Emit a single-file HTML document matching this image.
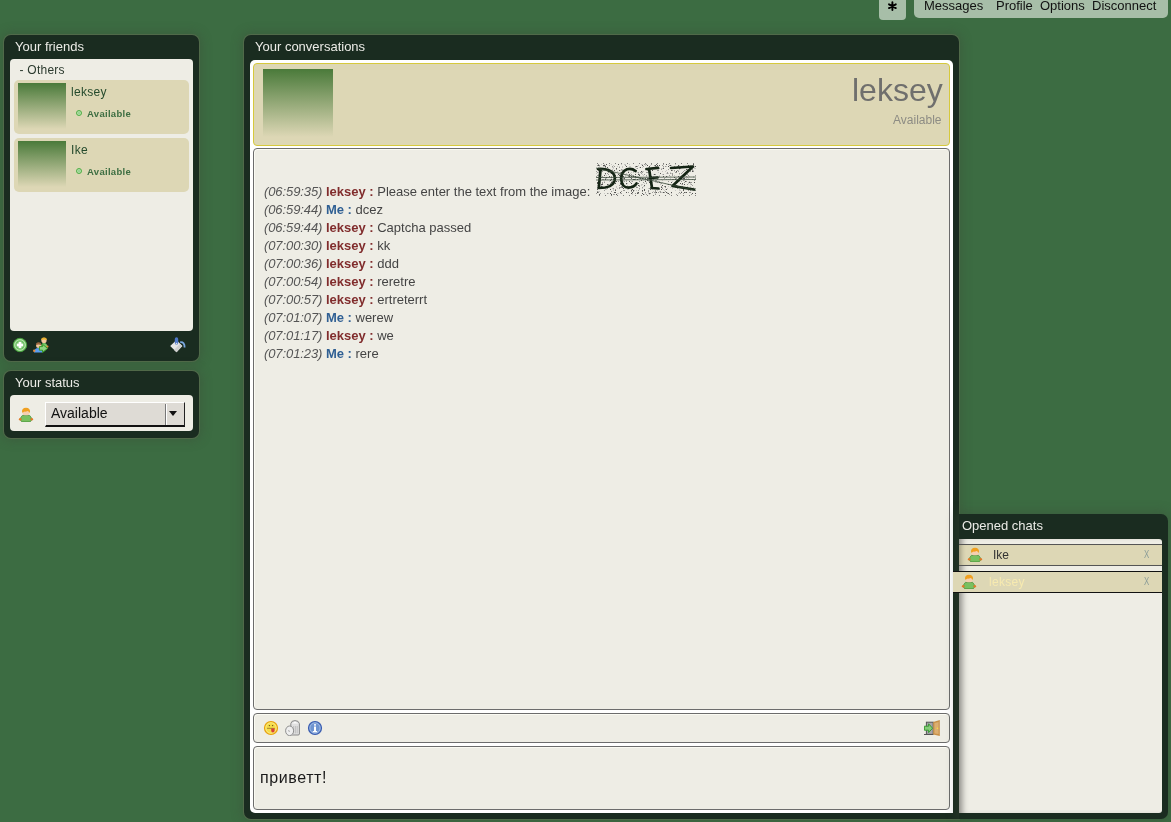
<!DOCTYPE html>
<html><head><meta charset="utf-8">
<style>
*{margin:0;padding:0;box-sizing:border-box}
html,body{width:1171px;height:822px;overflow:hidden}
body{background:#3c6c42;font-family:"Liberation Sans",sans-serif;position:relative}
.a{position:absolute}
.t{position:absolute;white-space:nowrap;line-height:1}
.panel{position:absolute;background:#1a2c20;border-radius:7px;box-shadow:0 0 0 1px rgba(120,120,95,.35),0 0 11px 2px rgba(60,70,55,.4)}
.ptitle{position:absolute;color:#ebebe6;font-size:13px;line-height:1;white-space:nowrap}
.inner{position:absolute;background:#eeede5;border-radius:4px}
.item{position:absolute;background:#ddd7b5;border-radius:5px}
.av{position:absolute;width:48px;height:46px;background:linear-gradient(#4a7a3a,#ddd7b5)}
.fname{position:absolute;font-size:12px;color:#244a2c;line-height:1;letter-spacing:.3px}
.dot{position:absolute;width:6px;height:6px;border-radius:50%;background:#9ad492;border:1px solid #52ae46;box-shadow:inset 0 0 0 .6px #c4e8bc}
.favail{position:absolute;font-size:9.5px;font-weight:bold;color:#3d6e42;line-height:1;letter-spacing:.3px}
.box{position:absolute;background:#eeede5;border:1px solid #6c6c6c;border-radius:4px;box-shadow:inset 1px 1px 0 #fbfbf3}
.msg{position:relative;font-size:13px;line-height:18px;color:#444;white-space:nowrap}
.ts{font-style:italic;color:#555;letter-spacing:-.1px}
.nl{font-weight:bold;color:#802c2c}
.nm{font-weight:bold;color:#2f5f93}
.menu{position:absolute;background:#a7bea8;}
.mi{position:absolute;top:-1px;font-size:13px;line-height:1;color:#111;white-space:nowrap}
.x{position:absolute;font-size:10px;line-height:1;color:#8a9c98;transform:scale(.78,1);transform-origin:0 0}
</style></head><body><div style="position:absolute;left:0;top:0;width:1171px;height:822px;will-change:transform">

<!-- top menu -->
<div class="menu" style="left:879px;top:0;width:27px;height:20px;border-radius:0 0 4px 4px"></div>
<svg class="a" style="left:886px;top:0" width="13" height="13" viewBox="0 0 13 13"><g stroke="#000" stroke-width="1.9" stroke-linecap="round"><path d="M6.4 2.3V10.1M3 4.3L9.8 8.1M3 8.1L9.8 4.3"/></g></svg>
<div class="menu" style="left:914px;top:0;width:254px;height:18px;border-radius:0 0 5px 5px"></div>
<div class="mi" style="left:924px">Messages</div>
<div class="mi" style="left:996px">Profile</div>
<div class="mi" style="left:1040px">Options</div>
<div class="mi" style="left:1092px">Disconnect</div>

<!-- friends panel -->
<div class="panel" style="left:4px;top:35px;width:195px;height:326px"></div>
<div class="ptitle" style="left:15px;top:40px">Your friends</div>
<div class="inner" style="left:10px;top:59px;width:183px;height:272px"></div>
<div class="t" style="left:19.5px;top:64px;font-size:12px;letter-spacing:.25px;color:#2b3a2e">- Others</div>

<div class="item" style="left:14px;top:80px;width:175px;height:54px"></div>
<div class="av" style="left:18px;top:83px"></div>
<div class="fname" style="left:71px;top:86px">leksey</div>
<div class="dot" style="left:76px;top:110px"></div>
<div class="favail" style="left:87px;top:108.5px">Available</div>

<div class="item" style="left:14px;top:138px;width:175px;height:54px"></div>
<div class="av" style="left:18px;top:141px"></div>
<div class="fname" style="left:71px;top:144px">Ike</div>
<div class="dot" style="left:76px;top:168px"></div>
<div class="favail" style="left:87px;top:166.5px">Available</div>

<!-- friends icons -->
<svg class="a" style="left:12px;top:337px" width="16" height="16" viewBox="0 0 16 16">
<circle cx="8" cy="8" r="6.7" fill="#70c266" stroke="#45a03c" stroke-width=".9"/>
<circle cx="8" cy="8" r="5.3" fill="none" stroke="#c8ecc0" stroke-width=".9"/>
<rect x="6.6" y="4.8" width="2.8" height="6.4" fill="#fff"/><rect x="4.8" y="6.6" width="6.4" height="2.8" fill="#fff"/>
</svg>
<svg class="a" style="left:33px;top:337px" width="16" height="16" viewBox="0 0 16 16">
<path d="M8 10 Q8 6 11 6 Q14.4 6 14.6 10.5Z" fill="#78c868"/><circle cx="14.4" cy="9.6" r="1.1" fill="#e0903a"/>
<circle cx="11" cy="3.4" r="2.6" fill="#f2c8a0"/><path d="M8.2 3.2 Q8 0.2 11 0.4 Q14 0.2 13.8 3.2 Q11 1.8 8.2 3.2Z" fill="#e8b030"/>
<circle cx="5.6" cy="8.6" r="2.5" fill="#f0c8a0"/><path d="M3 8.2 Q2.8 5.3 5.6 5.3 Q8.4 5.3 8.2 8.2 Q5.6 6.8 3 8.2Z" fill="#9a6840"/>
<path d="M1 15.6 Q1 11 5.6 11 Q9 11 9.4 15.6Z" fill="#5a9ef0"/><circle cx="1.2" cy="13.8" r="1.2" fill="#e08a40"/>
<path d="M6.4 9.6h3.2V7.4l5 4-5 4v-2.2H6.4Z" fill="#90d484" stroke="#3a9a2c" stroke-width="1"/>
</svg>
<svg class="a" style="left:170px;top:337px" width="16" height="16" viewBox="0 0 16 16">
<path d="M0.2 9 L6.5 3 L12.3 9 L6.5 15.3Z" fill="#e6e6e6"/>
<path d="M6.5 15.3 L12.3 9 L10 6.8 L4 13Z" fill="#cfcfcf"/>
<rect x="4.8" y="0.2" width="3.4" height="7.6" rx="1.7" fill="#4f78c8"/>
<circle cx="6.5" cy="6.6" r=".8" fill="#ddd"/>
<path d="M10.2 5.2 Q14.8 4.8 14.6 10.5" fill="none" stroke="#7aa8e0" stroke-width="1.8"/>
</svg>

<!-- status panel -->
<div class="panel" style="left:4px;top:371px;width:195px;height:67px"></div>
<div class="ptitle" style="left:15px;top:376px">Your status</div>
<div class="inner" style="left:10px;top:395px;width:183px;height:36px"></div>
<svg class="a" style="left:18px;top:406px" width="16" height="16" viewBox="0 0 16 16">
<path d="M4.4 9.4 Q2.2 11 2.6 14.2 Q3 15.9 5 15.9 L11 15.9 Q13 15.9 13.4 14.2 Q13.8 11 11.6 9.4Z" fill="#78c060" stroke="#3f8a30" stroke-width=".7"/>
<circle cx="2.2" cy="13.2" r="1.3" fill="#e07a28"/><circle cx="13.8" cy="13.2" r="1.3" fill="#e07a28"/>
<rect x="4.6" y="4.8" width="6.8" height="4.4" rx="2" fill="#f5cfb0"/>
<path d="M4 6.4 Q3.6 1.8 8 1.8 Q12.4 1.8 12 6.4 L11.2 6.4 Q10.5 4.8 8.5 5 L8.4 6 Q7 4.8 4.9 6.4Z" fill="#f0a020"/>
</svg>
<div class="a" style="left:45px;top:402px;width:140px;height:25px;background:#dedbd5;border-top:1px solid #fff;border-left:1px solid #fff;border-right:1px solid #222;border-bottom:2px solid #111"></div>
<div class="a" style="left:165px;top:404px;width:1px;height:21px;background:#777"></div>
<div class="a" style="left:166px;top:404px;width:1px;height:21px;background:#fff"></div>
<div class="a" style="left:169px;top:411px;width:0;height:0;border-left:4.5px solid transparent;border-right:4.5px solid transparent;border-top:5px solid #111"></div>
<div class="t" style="left:51px;top:406px;font-size:14px;color:#111">Available</div>

<!-- conversations panel -->
<div class="panel" style="left:244px;top:35px;width:715px;height:784px;border-radius:7px 7px 0 7px"></div>
<div class="ptitle" style="left:255px;top:40px">Your conversations</div>
<div class="a" style="left:250px;top:60px;width:703px;height:753px;background:#fff;border-radius:5px 5px 0 5px"></div>
<div class="a" style="left:253px;top:63px;width:697px;height:83px;background:#ddd7b5;border:1px solid #d6c93c;border-radius:4px"></div>
<div class="a" style="left:263px;top:69px;width:70px;height:68px;background:linear-gradient(#4a7a3a,#ddd7b5)"></div>
<div class="t" style="left:852px;top:74px;font-size:32px;color:#6f6f6d">leksey</div>
<div class="t" style="left:893px;top:114px;font-size:12px;color:#8d8c84">Available</div>

<div class="box" style="left:253px;top:148px;width:697px;height:562px"></div>
<div class="a" style="left:264px;top:163px">
<div class="msg"><span class="ts">(06:59:35)</span> <span class="nl">leksey :</span> Please enter the text from the image: <svg width="100" height="33" viewBox="0 0 100 33" style="vertical-align:baseline;margin-left:2px"><path fill="#222" opacity=".75" d="M75 7h1v1h-1zM88 21h1v1h-1zM8 2h1v1h-1zM30 20h1v1h-1zM37 16h1v1h-1zM13 13h1v1h-1zM37 13h1v1h-1zM72 21h1v1h-1zM39 11h1v1h-1zM93 25h1v1h-1zM82 13h1v1h-1zM53 7h1v1h-1zM2 7h1v1h-1zM5 5h1v1h-1zM9 3h1v1h-1zM10 14h1v1h-1zM26 24h1v1h-1zM7 2h1v1h-1zM17 19h1v1h-1zM43 12h1v1h-1zM60 29h1v1h-1zM63 19h1v1h-1zM1 20h1v1h-1zM11 21h1v1h-1zM39 20h1v1h-1zM86 20h1v1h-1zM96 30h1v1h-1zM27 13h1v1h-1zM40 7h1v1h-1zM5 23h1v1h-1zM35 27h1v1h-1zM51 15h1v1h-1zM47 31h1v1h-1zM17 16h1v1h-1zM14 17h1v1h-1zM15 16h1v1h-1zM2 2h1v1h-1zM79 16h1v1h-1zM93 19h1v1h-1zM20 18h1v1h-1zM24 29h1v1h-1zM33 13h1v1h-1zM87 26h1v1h-1zM87 27h1v1h-1zM9 16h1v1h-1zM18 7h1v1h-1zM74 2h1v1h-1zM87 15h1v1h-1zM81 23h1v1h-1zM24 20h1v1h-1zM65 26h1v1h-1zM35 30h1v1h-1zM95 25h1v1h-1zM55 25h1v1h-1zM38 16h1v1h-1zM51 17h1v1h-1zM5 21h1v1h-1zM96 8h1v1h-1zM45 17h1v1h-1zM46 15h1v1h-1zM3 20h1v1h-1zM19 12h1v1h-1zM9 10h1v1h-1zM84 20h1v1h-1zM36 29h1v1h-1zM46 30h1v1h-1zM58 11h1v1h-1zM49 18h1v1h-1zM75 19h1v1h-1zM36 26h1v1h-1zM35 24h1v1h-1zM40 3h1v1h-1zM83 5h1v1h-1zM42 22h1v1h-1zM48 27h1v1h-1zM1 26h1v1h-1zM53 30h1v1h-1zM48 22h1v1h-1zM99 30h1v1h-1zM4 11h1v1h-1zM23 12h1v1h-1zM28 15h1v1h-1zM35 13h1v1h-1zM51 2h1v1h-1zM30 29h1v1h-1zM20 14h1v1h-1zM22 1h1v1h-1zM19 27h1v1h-1zM88 15h1v1h-1zM64 10h1v1h-1zM56 7h1v1h-1zM39 13h1v1h-1zM8 12h1v1h-1zM58 25h1v1h-1zM11 4h1v1h-1zM90 6h1v1h-1zM12 8h1v1h-1zM37 27h1v1h-1zM99 3h1v1h-1zM42 11h1v1h-1zM42 20h1v1h-1zM46 27h1v1h-1zM97 1h1v1h-1zM52 15h1v1h-1zM67 13h1v1h-1zM15 19h1v1h-1zM41 30h1v1h-1zM75 29h1v1h-1zM53 19h1v1h-1zM3 11h1v1h-1zM41 16h1v1h-1zM88 29h1v1h-1zM60 1h1v1h-1zM89 18h1v1h-1zM80 8h1v1h-1zM6 21h1v1h-1zM53 3h1v1h-1zM25 9h1v1h-1zM67 29h1v1h-1zM72 3h1v1h-1zM70 1h1v1h-1zM19 29h1v1h-1zM63 2h1v1h-1zM19 20h1v1h-1zM14 30h1v1h-1zM79 5h1v1h-1zM67 5h1v1h-1zM48 26h1v1h-1zM70 26h1v1h-1zM80 22h1v1h-1zM35 20h1v1h-1zM46 2h1v1h-1zM49 15h1v1h-1zM66 22h1v1h-1zM5 7h1v1h-1zM76 5h1v1h-1zM69 23h1v1h-1zM18 29h1v1h-1zM45 8h1v1h-1zM90 9h1v1h-1zM54 26h1v1h-1zM85 29h1v1h-1zM27 25h1v1h-1zM78 14h1v1h-1zM20 31h1v1h-1zM65 24h1v1h-1zM90 10h1v1h-1zM61 2h1v1h-1zM82 23h1v1h-1zM20 5h1v1h-1zM42 29h1v1h-1zM18 15h1v1h-1zM62 14h1v1h-1zM33 18h1v1h-1zM39 22h1v1h-1zM32 9h1v1h-1zM92 2h1v1h-1zM3 31h1v1h-1zM15 22h1v1h-1zM1 29h1v1h-1zM1 19h1v1h-1zM33 11h1v1h-1zM23 7h1v1h-1zM44 4h1v1h-1zM22 11h1v1h-1zM90 29h1v1h-1zM82 2h1v1h-1zM72 30h1v1h-1zM70 13h1v1h-1zM14 26h1v1h-1zM44 15h1v1h-1zM30 3h1v1h-1zM70 29h1v1h-1zM55 13h1v1h-1zM59 2h1v1h-1zM52 7h1v1h-1zM35 15h1v1h-1zM15 31h1v1h-1zM15 10h1v1h-1zM98 19h1v1h-1zM10 1h1v1h-1z"/><path fill="#555" opacity=".55" d="M99 15h1v1h-1zM23 4h1v1h-1zM18 3h1v1h-1zM50 31h1v1h-1zM59 11h1v1h-1zM25 17h1v1h-1zM10 23h1v1h-1zM97 8h1v1h-1zM6 16h1v1h-1zM90 13h1v1h-1zM86 9h1v1h-1zM1 2h1v1h-1zM24 15h1v1h-1zM42 27h1v1h-1zM74 21h1v1h-1zM76 12h1v1h-1zM39 30h1v1h-1zM49 29h1v1h-1zM13 2h1v1h-1zM50 9h1v1h-1zM76 16h1v1h-1zM8 5h1v1h-1zM78 3h1v1h-1zM34 14h1v1h-1zM16 3h1v1h-1zM9 15h1v1h-1zM84 13h1v1h-1zM32 29h1v1h-1zM88 19h1v1h-1zM59 27h1v1h-1zM66 25h1v1h-1zM84 30h1v1h-1zM1 12h1v1h-1zM25 21h1v1h-1zM57 16h1v1h-1zM27 27h1v1h-1zM80 17h1v1h-1zM79 15h1v1h-1zM73 12h1v1h-1zM98 27h1v1h-1zM80 4h1v1h-1zM96 16h1v1h-1zM4 6h1v1h-1zM99 12h1v1h-1zM96 6h1v1h-1zM89 29h1v1h-1zM49 5h1v1h-1zM0 13h1v1h-1zM83 29h1v1h-1zM43 15h1v1h-1zM11 10h1v1h-1zM2 12h1v1h-1zM4 15h1v1h-1zM53 25h1v1h-1zM22 18h1v1h-1zM86 23h1v1h-1zM71 9h1v1h-1zM78 7h1v1h-1zM18 31h1v1h-1zM34 19h1v1h-1zM48 1h1v1h-1zM51 9h1v1h-1zM63 5h1v1h-1zM60 17h1v1h-1zM41 24h1v1h-1zM65 20h1v1h-1zM25 23h1v1h-1zM55 1h1v1h-1zM52 27h1v1h-1zM81 7h1v1h-1zM16 7h1v1h-1zM81 25h1v1h-1zM4 25h1v1h-1zM12 11h1v1h-1zM54 17h1v1h-1zM26 20h1v1h-1zM25 6h1v1h-1zM46 24h1v1h-1zM80 31h1v1h-1zM76 7h1v1h-1zM68 23h1v1h-1zM6 8h1v1h-1zM85 10h1v1h-1zM72 6h1v1h-1zM94 8h1v1h-1zM12 9h1v1h-1zM43 18h1v1h-1zM12 21h1v1h-1zM82 3h1v1h-1zM53 10h1v1h-1zM76 10h1v1h-1zM71 30h1v1h-1zM91 24h1v1h-1zM1 25h1v1h-1zM96 22h1v1h-1zM40 24h1v1h-1zM54 24h1v1h-1zM6 20h1v1h-1zM17 31h1v1h-1zM16 8h1v1h-1zM64 29h1v1h-1zM24 21h1v1h-1zM1 9h1v1h-1zM28 18h1v1h-1zM61 16h1v1h-1zM43 11h1v1h-1zM27 15h1v1h-1zM76 11h1v1h-1zM74 4h1v1h-1zM41 3h1v1h-1zM87 30h1v1h-1zM93 29h1v1h-1zM94 19h1v1h-1zM11 25h1v1h-1zM66 2h1v1h-1zM8 19h1v1h-1zM69 3h1v1h-1zM83 14h1v1h-1zM50 12h1v1h-1zM59 31h1v1h-1zM3 17h1v1h-1zM26 13h1v1h-1zM7 16h1v1h-1zM7 25h1v1h-1zM39 21h1v1h-1zM62 29h1v1h-1zM43 22h1v1h-1zM41 5h1v1h-1zM79 9h1v1h-1zM95 19h1v1h-1zM52 17h1v1h-1zM15 21h1v1h-1zM69 24h1v1h-1zM43 25h1v1h-1zM85 3h1v1h-1zM15 14h1v1h-1zM54 30h1v1h-1zM42 30h1v1h-1zM1 24h1v1h-1zM67 1h1v1h-1zM24 11h1v1h-1zM26 17h1v1h-1zM91 6h1v1h-1zM68 29h1v1h-1zM25 30h1v1h-1zM61 19h1v1h-1zM46 9h1v1h-1zM93 5h1v1h-1zM72 18h1v1h-1zM58 2h1v1h-1zM84 5h1v1h-1zM51 6h1v1h-1zM16 9h1v1h-1zM76 4h1v1h-1zM67 11h1v1h-1zM96 26h1v1h-1zM15 28h1v1h-1zM64 28h1v1h-1zM88 4h1v1h-1zM30 18h1v1h-1zM9 4h1v1h-1zM73 31h1v1h-1zM56 29h1v1h-1zM29 2h1v1h-1zM58 29h1v1h-1zM99 25h1v1h-1zM26 7h1v1h-1zM92 27h1v1h-1zM35 28h1v1h-1zM23 22h1v1h-1zM59 3h1v1h-1zM67 3h1v1h-1zM36 18h1v1h-1zM96 7h1v1h-1zM4 17h1v1h-1zM95 31h1v1h-1zM14 20h1v1h-1zM85 15h1v1h-1zM92 8h1v1h-1zM77 16h1v1h-1zM6 19h1v1h-1zM63 26h1v1h-1zM56 24h1v1h-1zM79 24h1v1h-1zM65 6h1v1h-1zM31 6h1v1h-1zM40 14h1v1h-1zM0 8h1v1h-1zM71 10h1v1h-1zM11 30h1v1h-1zM5 6h1v1h-1zM59 28h1v1h-1zM53 12h1v1h-1zM27 20h1v1h-1zM39 16h1v1h-1zM62 7h1v1h-1zM6 23h1v1h-1zM23 24h1v1h-1zM91 7h1v1h-1zM17 25h1v1h-1zM48 11h1v1h-1zM50 20h1v1h-1zM39 14h1v1h-1zM90 18h1v1h-1zM95 21h1v1h-1zM15 13h1v1h-1zM51 7h1v1h-1zM11 24h1v1h-1zM2 29h1v1h-1zM6 13h1v1h-1zM74 10h1v1h-1zM41 29h1v1h-1zM3 2h1v1h-1zM47 19h1v1h-1zM8 27h1v1h-1zM87 17h1v1h-1zM24 9h1v1h-1zM87 8h1v1h-1zM0 30h1v1h-1zM50 1h1v1h-1zM42 9h1v1h-1zM26 23h1v1h-1zM20 6h1v1h-1zM37 12h1v1h-1zM85 18h1v1h-1zM82 8h1v1h-1zM52 28h1v1h-1zM44 9h1v1h-1zM94 27h1v1h-1zM79 22h1v1h-1zM69 28h1v1h-1zM47 3h1v1h-1zM83 10h1v1h-1zM18 19h1v1h-1zM88 7h1v1h-1zM35 11h1v1h-1zM61 7h1v1h-1zM25 28h1v1h-1zM4 14h1v1h-1zM37 28h1v1h-1zM39 3h1v1h-1zM98 17h1v1h-1zM63 13h1v1h-1zM92 12h1v1h-1zM45 10h1v1h-1zM16 18h1v1h-1zM2 1h1v1h-1zM41 14h1v1h-1zM23 25h1v1h-1zM91 21h1v1h-1zM55 22h1v1h-1zM73 2h1v1h-1zM80 15h1v1h-1zM68 15h1v1h-1zM24 24h1v1h-1zM62 4h1v1h-1zM91 11h1v1h-1zM1 28h1v1h-1zM19 26h1v1h-1zM4 30h1v1h-1zM28 27h1v1h-1zM59 29h1v1h-1zM43 23h1v1h-1zM78 20h1v1h-1zM46 28h1v1h-1zM80 9h1v1h-1zM65 23h1v1h-1zM86 21h1v1h-1zM25 24h1v1h-1zM81 3h1v1h-1zM1 14h1v1h-1zM32 13h1v1h-1zM84 4h1v1h-1zM60 3h1v1h-1zM59 17h1v1h-1zM26 16h1v1h-1zM18 17h1v1h-1zM94 29h1v1h-1z"/><path fill="#999" opacity=".45" d="M57 28h1v1h-1zM65 16h1v1h-1zM94 20h1v1h-1zM79 1h1v1h-1zM10 15h1v1h-1zM52 18h1v1h-1zM3 3h1v1h-1zM2 28h1v1h-1zM27 7h1v1h-1zM52 25h1v1h-1zM17 8h1v1h-1zM62 6h1v1h-1zM75 10h1v1h-1zM77 21h1v1h-1zM33 1h1v1h-1zM58 5h1v1h-1zM61 27h1v1h-1zM49 6h1v1h-1zM78 8h1v1h-1zM20 24h1v1h-1zM70 7h1v1h-1zM32 8h1v1h-1zM22 30h1v1h-1zM71 21h1v1h-1zM47 17h1v1h-1zM57 11h1v1h-1zM88 17h1v1h-1zM2 16h1v1h-1zM89 10h1v1h-1zM2 20h1v1h-1zM61 3h1v1h-1zM40 5h1v1h-1zM94 2h1v1h-1zM94 24h1v1h-1zM53 31h1v1h-1zM42 13h1v1h-1zM2 8h1v1h-1zM14 16h1v1h-1zM21 25h1v1h-1zM56 16h1v1h-1zM41 13h1v1h-1zM63 12h1v1h-1zM40 23h1v1h-1zM4 9h1v1h-1zM5 22h1v1h-1zM72 1h1v1h-1zM99 5h1v1h-1zM80 18h1v1h-1zM25 7h1v1h-1zM32 6h1v1h-1zM66 17h1v1h-1zM52 30h1v1h-1zM26 4h1v1h-1zM82 30h1v1h-1zM27 8h1v1h-1zM41 9h1v1h-1zM3 7h1v1h-1zM8 14h1v1h-1zM66 29h1v1h-1zM88 3h1v1h-1zM56 17h1v1h-1zM93 18h1v1h-1zM48 31h1v1h-1zM5 17h1v1h-1zM69 26h1v1h-1zM21 3h1v1h-1zM58 14h1v1h-1zM24 14h1v1h-1zM33 5h1v1h-1zM29 1h1v1h-1zM69 20h1v1h-1zM94 21h1v1h-1zM23 11h1v1h-1zM24 7h1v1h-1zM30 5h1v1h-1zM53 18h1v1h-1zM25 19h1v1h-1zM46 4h1v1h-1zM65 29h1v1h-1zM26 6h1v1h-1zM36 30h1v1h-1zM10 26h1v1h-1zM43 26h1v1h-1zM51 5h1v1h-1zM23 3h1v1h-1zM45 21h1v1h-1zM49 17h1v1h-1zM82 7h1v1h-1zM97 13h1v1h-1zM2 4h1v1h-1zM66 19h1v1h-1zM85 25h1v1h-1zM49 30h1v1h-1zM49 16h1v1h-1zM63 18h1v1h-1zM7 14h1v1h-1zM36 16h1v1h-1zM74 24h1v1h-1zM9 26h1v1h-1zM12 30h1v1h-1zM59 5h1v1h-1zM31 20h1v1h-1zM15 7h1v1h-1zM53 15h1v1h-1zM81 19h1v1h-1zM46 25h1v1h-1zM64 20h1v1h-1zM35 9h1v1h-1zM92 19h1v1h-1zM30 7h1v1h-1zM64 21h1v1h-1zM87 2h1v1h-1zM96 3h1v1h-1zM30 21h1v1h-1zM17 27h1v1h-1zM15 15h1v1h-1zM79 27h1v1h-1zM97 24h1v1h-1zM23 14h1v1h-1zM55 19h1v1h-1zM38 27h1v1h-1zM92 25h1v1h-1zM45 22h1v1h-1zM90 15h1v1h-1zM67 26h1v1h-1zM10 12h1v1h-1zM3 12h1v1h-1zM74 13h1v1h-1zM72 10h1v1h-1zM83 27h1v1h-1zM28 16h1v1h-1zM66 11h1v1h-1zM62 18h1v1h-1zM9 23h1v1h-1zM5 14h1v1h-1zM85 12h1v1h-1zM94 6h1v1h-1zM37 9h1v1h-1zM14 10h1v1h-1zM74 16h1v1h-1zM91 16h1v1h-1zM70 16h1v1h-1zM11 16h1v1h-1zM17 26h1v1h-1zM35 26h1v1h-1zM47 15h1v1h-1zM91 14h1v1h-1zM66 5h1v1h-1zM6 5h1v1h-1zM45 9h1v1h-1zM67 4h1v1h-1zM24 30h1v1h-1zM39 15h1v1h-1zM17 4h1v1h-1zM86 15h1v1h-1zM48 23h1v1h-1zM30 10h1v1h-1zM92 7h1v1h-1zM19 10h1v1h-1zM25 13h1v1h-1zM42 10h1v1h-1zM72 16h1v1h-1zM42 15h1v1h-1zM12 5h1v1h-1zM59 19h1v1h-1zM9 11h1v1h-1zM98 5h1v1h-1zM89 11h1v1h-1zM31 22h1v1h-1zM56 4h1v1h-1zM29 12h1v1h-1zM65 5h1v1h-1zM91 23h1v1h-1zM3 21h1v1h-1zM8 18h1v1h-1zM21 30h1v1h-1zM0 10h1v1h-1zM46 8h1v1h-1zM76 18h1v1h-1zM85 28h1v1h-1zM48 20h1v1h-1zM42 2h1v1h-1zM4 24h1v1h-1zM18 13h1v1h-1zM52 29h1v1h-1zM97 14h1v1h-1zM88 14h1v1h-1zM55 14h1v1h-1zM92 20h1v1h-1zM93 13h1v1h-1zM8 30h1v1h-1zM69 14h1v1h-1zM21 8h1v1h-1zM16 4h1v1h-1zM37 8h1v1h-1zM18 12h1v1h-1zM40 27h1v1h-1zM17 11h1v1h-1zM39 4h1v1h-1zM30 17h1v1h-1zM34 12h1v1h-1zM66 8h1v1h-1zM16 21h1v1h-1zM5 1h1v1h-1zM59 30h1v1h-1zM49 1h1v1h-1zM71 25h1v1h-1zM46 11h1v1h-1zM81 22h1v1h-1zM76 25h1v1h-1zM32 26h1v1h-1zM69 8h1v1h-1zM25 20h1v1h-1zM81 18h1v1h-1zM54 2h1v1h-1zM33 25h1v1h-1zM84 27h1v1h-1zM89 7h1v1h-1zM62 25h1v1h-1zM17 5h1v1h-1zM66 24h1v1h-1zM9 2h1v1h-1zM91 25h1v1h-1zM15 18h1v1h-1zM83 2h1v1h-1zM72 23h1v1h-1zM75 30h1v1h-1zM50 19h1v1h-1zM15 1h1v1h-1zM92 15h1v1h-1zM35 18h1v1h-1zM47 12h1v1h-1zM17 2h1v1h-1zM38 22h1v1h-1zM27 18h1v1h-1zM85 4h1v1h-1zM47 8h1v1h-1zM33 3h1v1h-1zM62 13h1v1h-1zM21 12h1v1h-1zM74 9h1v1h-1zM70 10h1v1h-1zM60 13h1v1h-1zM46 1h1v1h-1zM57 13h1v1h-1zM49 2h1v1h-1zM63 28h1v1h-1zM70 3h1v1h-1zM71 29h1v1h-1zM2 11h1v1h-1zM88 16h1v1h-1zM8 3h1v1h-1zM57 17h1v1h-1zM94 26h1v1h-1zM32 23h1v1h-1zM47 23h1v1h-1zM97 7h1v1h-1zM16 19h1v1h-1zM83 6h1v1h-1zM60 19h1v1h-1zM17 9h1v1h-1zM53 9h1v1h-1zM50 13h1v1h-1zM20 23h1v1h-1zM36 12h1v1h-1zM13 18h1v1h-1zM2 9h1v1h-1zM18 9h1v1h-1zM8 1h1v1h-1zM61 5h1v1h-1zM71 13h1v1h-1zM78 22h1v1h-1zM56 19h1v1h-1zM45 1h1v1h-1zM31 26h1v1h-1zM68 27h1v1h-1zM98 4h1v1h-1zM61 13h1v1h-1zM52 9h1v1h-1zM46 21h1v1h-1zM83 11h1v1h-1zM75 4h1v1h-1zM34 3h1v1h-1zM1 5h1v1h-1zM78 12h1v1h-1zM94 23h1v1h-1zM29 13h1v1h-1zM75 2h1v1h-1zM32 24h1v1h-1zM16 25h1v1h-1zM83 26h1v1h-1zM8 6h1v1h-1zM62 9h1v1h-1zM56 26h1v1h-1zM53 6h1v1h-1zM3 28h1v1h-1zM26 18h1v1h-1zM93 7h1v1h-1zM35 22h1v1h-1zM16 6h1v1h-1zM14 9h1v1h-1zM25 1h1v1h-1zM36 31h1v1h-1zM74 15h1v1h-1zM34 10h1v1h-1zM1 22h1v1h-1zM43 4h1v1h-1zM26 3h1v1h-1zM3 24h1v1h-1zM89 12h1v1h-1zM2 22h1v1h-1zM85 21h1v1h-1zM28 1h1v1h-1zM50 14h1v1h-1zM83 18h1v1h-1zM7 3h1v1h-1zM83 13h1v1h-1zM27 17h1v1h-1zM83 23h1v1h-1zM93 16h1v1h-1z"/><path fill="#333" opacity=".6" d="M1 0h1v1h-1zM3 32h1v1h-1zM7 0h1v1h-1zM9 32h1v1h-1zM13 0h1v1h-1zM15 32h1v1h-1zM19 0h1v1h-1zM21 32h1v1h-1zM25 0h1v1h-1zM27 32h1v1h-1zM31 0h1v1h-1zM33 32h1v1h-1zM37 0h1v1h-1zM39 32h1v1h-1zM43 0h1v1h-1zM45 32h1v1h-1zM49 0h1v1h-1zM51 32h1v1h-1zM55 0h1v1h-1zM57 32h1v1h-1zM61 0h1v1h-1zM63 32h1v1h-1zM67 0h1v1h-1zM69 32h1v1h-1zM73 0h1v1h-1zM75 32h1v1h-1zM79 0h1v1h-1zM81 32h1v1h-1zM85 0h1v1h-1zM87 32h1v1h-1zM91 0h1v1h-1zM93 32h1v1h-1zM97 0h1v1h-1zM99 32h1v1h-1z"/>
<g fill="none" stroke="#142414" stroke-width="2.7" stroke-linecap="round" stroke-linejoin="round">
<path d="M4.5 7 L2.8 25 M2 6 Q10 5.5 15 8.5 Q20 12 18.5 18 Q16.5 25 2.8 25"/>
<path d="M39.5 8 Q36 5 31 6.2 Q25 8.5 25.2 16.5 Q25.8 24.5 32.5 24.6 Q38 24.4 40.5 20.5"/>
<path d="M53 5.5 L56 25 M50.5 6 L62 4.8 M54 15 L61.5 14.5 M55.5 25 L62.5 25.5"/>
<path d="M75 5 L97 3.5 L76.5 23 L98 26.5"/>
</g>
<path d="M0 14.5 L100 14 M0 17 L100 16.5 M0 5 L100 27.5" stroke="#3a4a3a" stroke-width=".9" opacity=".85" fill="none"/>
</svg></div>
<div class="msg"><span class="ts">(06:59:44)</span> <span class="nm">Me :</span> dcez</div>
<div class="msg"><span class="ts">(06:59:44)</span> <span class="nl">leksey :</span> Captcha passed</div>
<div class="msg"><span class="ts">(07:00:30)</span> <span class="nl">leksey :</span> kk</div>
<div class="msg"><span class="ts">(07:00:36)</span> <span class="nl">leksey :</span> ddd</div>
<div class="msg"><span class="ts">(07:00:54)</span> <span class="nl">leksey :</span> reretre</div>
<div class="msg"><span class="ts">(07:00:57)</span> <span class="nl">leksey :</span> ertreterrt</div>
<div class="msg"><span class="ts">(07:01:07)</span> <span class="nm">Me :</span> werew</div>
<div class="msg"><span class="ts">(07:01:17)</span> <span class="nl">leksey :</span> we</div>
<div class="msg"><span class="ts">(07:01:23)</span> <span class="nm">Me :</span> rere</div>
</div>

<div class="box" style="left:253px;top:713px;width:697px;height:30px"></div>
<!-- smiley -->
<svg class="a" style="left:263px;top:720px" width="16" height="16" viewBox="0 0 16 16">
<circle cx="8" cy="8" r="6.5" fill="#f5dc48" stroke="#e8a010" stroke-width="1.2"/>
<circle cx="8" cy="8" r="5.2" fill="none" stroke="#fbeea0" stroke-width=".6"/>
<circle cx="6.4" cy="5.6" r=".7" fill="#6a5020"/><circle cx="9.6" cy="5.6" r=".7" fill="#6a5020"/>
<path d="M4 8.3 L11.8 8.4" stroke="#a08030" stroke-width=".9"/>
<path d="M8.2 8.4 h3.4 v2 q0 2 -1.7 2 q-1.7 0 -1.7 -2z" fill="#d8403a"/>
</svg>
<!-- clean -->
<svg class="a" style="left:285px;top:720px" width="16" height="16" viewBox="0 0 16 16">
<path d="M5.8 3.6 Q6.2 0.6 10 0.6 Q13.8 0.6 14.4 3.6 L14.4 14 Q14.4 15 13 15 L7 15 Q5.8 15 5.8 14Z" fill="#e0e0e0" stroke="#8a8a8a" stroke-width="1"/>
<path d="M8.6 6 V13.4 M10.4 6 V13.4 M12.2 6 V13.4" stroke="#b8b8b8" stroke-width=".8"/>
<path d="M7 3.4 L10 1.4 L13.2 3.6" fill="#fafafa"/>
<ellipse cx="4.6" cy="10.8" rx="4" ry="4.8" fill="#efefef" stroke="#8e8e8e" stroke-width="1"/>
<path d="M3 10.6 L5 11.4" stroke="#999" stroke-width=".8"/>
</svg>
<!-- info -->
<svg class="a" style="left:307px;top:720px" width="16" height="16" viewBox="0 0 16 16">
<circle cx="8" cy="8" r="6.5" fill="#6f94d0" stroke="#3a5cb0" stroke-width="1.2"/>
<circle cx="8" cy="8" r="5.1" fill="none" stroke="#b0c8ec" stroke-width=".7"/>
<rect x="7" y="4.2" width="2" height="1.4" fill="#fff"/>
<path d="M7 6.6h2v4.4h1.1v1.2H5.8v-1.2H7Z" fill="#fff"/>
</svg>
<!-- exit -->
<svg class="a" style="left:924px;top:720px" width="16" height="16" viewBox="0 0 16 16">
<rect x="2.4" y="2.2" width="6.8" height="12.2" fill="#a6a4aa" stroke="#555" stroke-width="1"/>
<path d="M0 14.5 H9" stroke="#555" stroke-width="1"/>
<path d="M9.2 2 L15.8 0 L15.8 16 L9.2 14.6Z" fill="#c89048"/>
<path d="M10.4 3 L14.6 2 L14.6 14 L10.4 13.4Z" fill="#dcae70"/>
<circle cx="13.4" cy="8.3" r=".8" fill="#f8e040"/>
<path d="M0.4 6.2 H4.6 V3.8 L8.6 8.2 L4.6 12.6 V10.2 H0.4Z" fill="#84cc78" stroke="#3a9a32" stroke-width="1"/>
</svg>

<div class="box" style="left:253px;top:746px;width:697px;height:64px"></div>
<div class="t" style="left:260px;top:770px;font-size:16px;letter-spacing:.6px;color:#1a1a1a">приветт!</div>

<!-- opened chats -->
<div class="a" style="left:959px;top:514px;width:209px;height:305px;background:#1a2c20;border-radius:0 7px 7px 0;box-shadow:0 0 11px 2px rgba(60,70,55,.4)"></div>
<div class="ptitle" style="left:962px;top:519px">Opened chats</div>
<div class="a" style="left:959px;top:539px;width:203px;height:274px;background:#eeede5;border-radius:0 3px 3px 0;box-shadow:inset 7px 0 6px -4px rgba(0,0,0,.42)"></div>
<div class="a" style="left:959px;top:544px;width:203px;height:22px;background:#ddd7b5;border-top:1px solid #555;border-bottom:1px solid #555;box-shadow:inset 6px 0 5px -4px rgba(0,0,0,.3)"></div>
<svg class="a" style="left:967px;top:546px" width="16" height="16" viewBox="0 0 16 16">
<path d="M4.4 9.4 Q2.2 11 2.6 14.2 Q3 15.9 5 15.9 L11 15.9 Q13 15.9 13.4 14.2 Q13.8 11 11.6 9.4Z" fill="#78c060" stroke="#3f8a30" stroke-width=".7"/>
<circle cx="2.2" cy="13.2" r="1.3" fill="#e07a28"/><circle cx="13.8" cy="13.2" r="1.3" fill="#e07a28"/>
<rect x="4.6" y="4.8" width="6.8" height="4.4" rx="2" fill="#f5cfb0"/>
<path d="M4 6.4 Q3.6 1.8 8 1.8 Q12.4 1.8 12 6.4 L11.2 6.4 Q10.5 4.8 8.5 5 L8.4 6 Q7 4.8 4.9 6.4Z" fill="#f0a020"/>
</svg>
<div class="t" style="left:993px;top:549px;font-size:12px;color:#333">Ike</div>
<div class="x" style="left:1144px;top:550px">X</div>
<div class="a" style="left:953px;top:571px;width:209px;height:22px;background:#ddd7b5;border-top:1px solid #111;border-bottom:1px solid #111"></div>
<svg class="a" style="left:961px;top:573px" width="16" height="16" viewBox="0 0 16 16">
<path d="M4.4 9.4 Q2.2 11 2.6 14.2 Q3 15.9 5 15.9 L11 15.9 Q13 15.9 13.4 14.2 Q13.8 11 11.6 9.4Z" fill="#78c060" stroke="#3f8a30" stroke-width=".7"/>
<circle cx="2.2" cy="13.2" r="1.3" fill="#e07a28"/><circle cx="13.8" cy="13.2" r="1.3" fill="#e07a28"/>
<rect x="4.6" y="4.8" width="6.8" height="4.4" rx="2" fill="#f5cfb0"/>
<path d="M4 6.4 Q3.6 1.8 8 1.8 Q12.4 1.8 12 6.4 L11.2 6.4 Q10.5 4.8 8.5 5 L8.4 6 Q7 4.8 4.9 6.4Z" fill="#f0a020"/>
</svg>
<div class="t" style="left:989px;top:576px;font-size:12px;letter-spacing:.3px;color:#f7eab0">leksey</div>
<div class="x" style="left:1144px;top:577px">X</div>

</div></body></html>
